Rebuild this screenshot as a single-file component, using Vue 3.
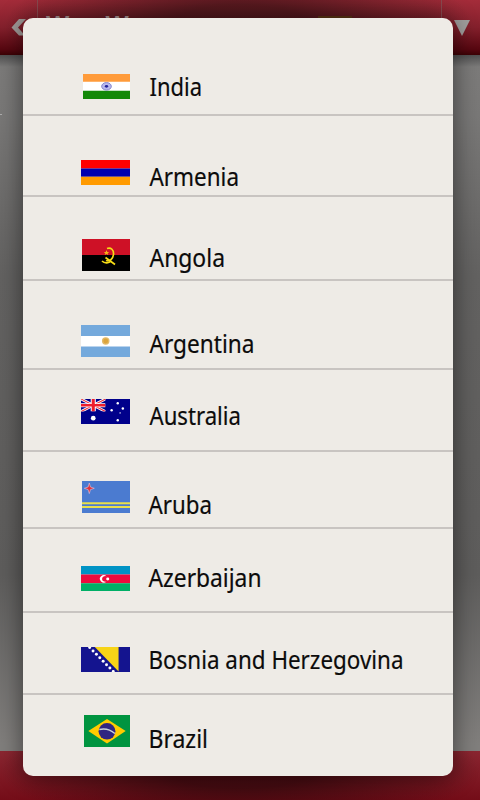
<script setup>
const countries = [
  { id: 'india', name: 'India', width: 52.5 },
  { id: 'armenia', name: 'Armenia', width: 89.5 },
  { id: 'angola', name: 'Angola', width: 75.5 },
  { id: 'argentina', name: 'Argentina', width: 105 },
  { id: 'australia', name: 'Australia', width: 91.5 },
  { id: 'aruba', name: 'Aruba', width: 63.5 },
  { id: 'azerbaijan', name: 'Azerbaijan', width: 113 },
  { id: 'bosnia', name: 'Bosnia and Herzegovina', width: 255 },
  { id: 'brazil', name: 'Brazil', width: 59.5 }
]
const bosniaStars = [0, 1, 2, 3, 4, 5, 6, 7]
</script>

<template>
  <div class="screen">
    <header class="topbar">
      <svg class="back" viewBox="0 0 16 20"><path d="M8 1H15L7 9.500L14 17.500H8L.500 9.500Z" /></svg>
      <i class="divider"></i>
      <span class="title">Won W</span>
      <i class="chip"></i>
      <i class="divider right"></i>
      <svg class="caret" viewBox="0 0 16 16"><path d="M0 0H16L8 16Z" /></svg>
    </header>
    <main class="body"></main>
    <footer class="bottombar"></footer>
    <div class="shade"></div>
    <i class="tick"></i>

    <ul class="panel">
      <li v-for="c in countries" :key="c.id" class="row" :class="c.id">
        <svg class="flag" viewBox="0 0 48 32" preserveAspectRatio="none">
          <template v-if="c.id === 'india'">
            <path fill="#fff" d="M0 0H48V32H0Z" />
            <path fill="#ff9b3a" d="M0 0H48V10H0Z" />
            <path fill="#138808" d="M0 21.5H48V32H0Z" />
            <ellipse cx="24" cy="15.8" rx="4.9" ry="4.8" fill="#b9b9ee" stroke="#7777c4" stroke-width="1" />
            <ellipse cx="24" cy="15.8" rx="1.7" ry="1.8" fill="#24249b" />
          </template>
          <template v-else-if="c.id === 'armenia'">
            <path fill="#f00" d="M0 0H48V11H0Z" />
            <path fill="#0000b0" d="M0 11H48V21.5H0Z" />
            <path fill="#ff9a00" d="M0 21.5H48V32H0Z" />
          </template>
          <template v-else-if="c.id === 'angola'">
            <path fill="#ce1126" d="M0 0H48V16H0Z" />
            <path d="M0 16H48V32H0Z" />
            <g fill="none" stroke="#f7dd16" stroke-width="1.700">
              <path d="M25 9.500C29 8 32 11 31.500 15.500C31 20 27.500 23 24 21.500" />
              <path d="M20 22C23 25 27 24 29 22M23.500 18.500L33 25.500" />
            </g>
            <path fill="#f7b516" d="M24.500 11L25.300 13H27.200L25.700 14.200L26.300 16L24.500 15L22.700 16L23.300 14.200L21.800 13H23.700Z" />
          </template>
          <template v-else-if="c.id === 'argentina'">
            <path fill="#74a9dc" d="M0 0H48V32H0Z" />
            <path fill="#fff" d="M0 11H48V21.500H0Z" />
            <circle cx="24.200" cy="16" r="3.700" fill="#e3ba68" />
            <circle cx="24.200" cy="16" r="2.400" fill="#dba43d" />
          </template>
          <template v-else-if="c.id === 'australia'">
            <path fill="#00008b" d="M0 0H48V32H0Z" />
            <svg width="24" height="16" viewBox="0 0 24 16">
              <path stroke="#fff" stroke-width="3.400" d="M0 0L24 16M24 0L0 16" />
              <path stroke="#f0303c" stroke-width="1.300" d="M0 0L24 16M24 0L0 16" />
              <path stroke="#fff" stroke-width="5" d="M12 0V16M0 8H24" />
              <path stroke="#ee1c2c" stroke-width="3" d="M12 0V16M0 8H24" />
            </svg>
            <g fill="#fff">
              <ellipse cx="12" cy="24.500" rx="2.300" ry="3" />
              <ellipse cx="36" cy="5.500" rx="1.200" ry="1.600" />
              <ellipse cx="30" cy="14.500" rx="1.200" ry="1.600" />
              <ellipse cx="41" cy="12" rx="1.200" ry="1.600" />
              <ellipse cx="38.300" cy="17.800" rx=".7" ry=".9" />
              <ellipse cx="36" cy="27.200" rx="1.200" ry="1.600" />
            </g>
          </template>
          <template v-else-if="c.id === 'aruba'">
            <path fill="#4b7bd0" d="M0 0H48V32H0Z" />
            <path fill="#e8e04a" d="M0 21.300H48V23.300H0ZM0 25H48V27H0Z" />
            <path fill="#e0303c" stroke="#e6c4d8" stroke-width=".6" d="M7.300 2L8.500 6L12.300 7.300L8.500 8.600L7.300 12.600L6.100 8.600L2.300 7.300L6.100 6Z" />
          </template>
          <template v-else-if="c.id === 'azerbaijan'">
            <path fill="#0093c5" d="M0 0H48V11H0Z" />
            <path fill="#ed0b3d" d="M0 11H48V22H0Z" />
            <path fill="#00af66" d="M0 22H48V32H0Z" />
            <path fill="#fff" d="M25 13.200A3.800 4.600 0 1 0 25 19.800A3 3.700 0 1 1 25 13.200Z" />
            <ellipse cx="26.200" cy="16.500" rx="1.500" ry="1.900" fill="#fff" />
          </template>
          <template v-else-if="c.id === 'bosnia'">
            <path fill="#14148f" d="M0 0H48V32H0Z" />
            <path fill="#f7d417" d="M13.500 0H36.800V31.500Z" />
            <ellipse v-for="i in bosniaStars" :key="i" :cx="8.500 + i * 3.300" :cy="0.600 + i * 4.400" rx="1.450" ry="1.900" fill="#fff" />
          </template>
          <template v-else>
            <path fill="#009440" d="M0 0H48V32H0Z" />
            <path fill="#ffcb00" d="M24 4L43.500 16L24 28.500L4.500 16Z" />
            <ellipse cx="24" cy="16.300" rx="8.800" ry="8.300" fill="#302681" />
            <path fill="none" stroke="#c9d3dc" stroke-width="1.500" d="M16 14.500Q25 12.500 32.200 18.500" />
          </template>
        </svg>
        <svg class="label" height="36" :width="c.width + 4">
          <text x="0.5" y="26" :textLength="c.width" lengthAdjust="spacingAndGlyphs">{{ c.name }}</text>
        </svg>
      </li>
    </ul>
  </div>
</template>

<style>
body { margin: 0; background: #555; }
</style>

<style scoped>
.screen {
  position: relative;
  display: flex;
  flex-direction: column;
  width: 480px;
  height: 800px;
  overflow: hidden;
  font-family: "Noto Sans", "Open Sans", sans-serif;
}
.topbar {
  display: flex;
  align-items: flex-start;
  box-sizing: border-box;
  height: 55px;
  padding-left: 11px;
  background:
    radial-gradient(ellipse 235px 75px at 50% 50%, rgba(50, 16, 18, .65) 30%, rgba(60, 14, 18, 0) 100%),
    linear-gradient(#a42c3a, #84202c 50%, #570710 90%, #3c0205);
}
.back { width: 16px; height: 20px; margin-top: 18px; fill: #a39d9b; }
.divider { width: 1px; height: 20px; margin-left: 10px; background: #8a4a50; }
.title { margin: 7px 0 0 8px; width: 100px; color: #b09a9a; font-size: 24px; font-weight: 700; white-space: nowrap; }
.chip { width: 34px; height: 14px; margin: 16px 0 0 172px; background: #5e3614; }
.divider.right { margin-left: 89px; }
.caret { width: 16px; height: 16px; margin: 20px 0 0 12px; fill: #a19f9e; }
.body {
  flex: 1;
  background: linear-gradient(#505050, #7c7b7a 12px, #797877 60px, #636261 220px, #5e5d5c 520px, #817f7d 690px);
}
.bottombar {
  height: 49px;
  background:
    radial-gradient(ellipse 240px 60px at 50% 40%, rgba(50, 8, 12, .75) 30%, rgba(60, 14, 18, 0) 100%),
    linear-gradient(#8b2631, #740d18);
}
.shade {
  position: absolute;
  left: 23px;
  top: 18px;
  width: 430px;
  height: 758px;
  border-radius: 10px;
  box-shadow: 0 0 24px 1px rgba(0, 0, 0, .48);
}
.tick { position: absolute; left: 0; top: 114px; width: 2px; height: 1px; background: #aaa; }
.panel {
  position: absolute;
  left: 23px;
  top: 18px;
  display: flex;
  flex-direction: column;
  box-sizing: border-box;
  width: 430px;
  height: 758px;
  margin: 0;
  padding: 0;
  overflow: hidden;
  list-style: none;
  border-radius: 10px;
  background: #eeebe6;
}
.row {
  display: flex;
  flex: none;
  align-items: flex-start;
  box-sizing: border-box;
  border-bottom: 2px solid #c8c4c1;
}
.flag { flex: none; width: 49px; height: 25px; margin-left: 58px; }
.label { flex: none; margin-left: 19px; overflow: visible; }
.label text { font-size: 24.500px; fill: #0c0b0b; stroke: #0c0b0b; stroke-width: .2px; }

.india { height: 98px; }
.india .flag { width: 47px; margin: 56px 0 0 60px; }
.india .label { margin-top: 52px; }
.armenia { height: 81px; }
.armenia .flag { margin-top: 44px; }
.armenia .label { margin-top: 44px; }
.angola { height: 84px; }
.angola .flag { width: 48px; height: 32px; margin: 42px 0 0 59px; }
.angola .label { margin-top: 44px; }
.argentina { height: 89px; }
.argentina .flag { height: 32px; margin-top: 44px; }
.argentina .label { margin-top: 46px; }
.australia { height: 82px; }
.australia .flag { margin-top: 29px; }
.australia .label { margin-top: 29px; }
.aruba { height: 77px; }
.aruba .flag { width: 48px; height: 32px; margin: 29px 0 0 59px; }
.aruba .label { margin: 36px 0 0 18px; }
.azerbaijan { height: 84px; }
.azerbaijan .flag { margin-top: 37px; }
.azerbaijan .label { margin: 32px 0 0 18px; }
.bosnia { height: 82px; }
.bosnia .flag { margin-top: 34px; }
.bosnia .label { margin: 30px 0 0 18px; }
.brazil { height: 81px; border-bottom: 0; }
.brazil .flag { width: 46px; height: 32px; margin: 20px 0 0 61px; }
.brazil .label { margin: 27px 0 0 18px; }
</style>
